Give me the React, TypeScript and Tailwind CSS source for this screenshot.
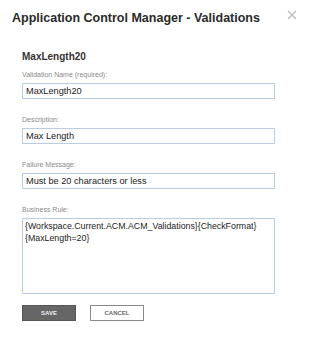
import React from 'react';

const Field: React.FC<{ label: string; value: string }> = ({ label, value }) => (
  <div className="mb-[17px]">
    <div className="text-[7px] leading-[8px] text-[#8a8a8a] mb-[4px]">{label}</div>
    <div className="h-[16px] w-[253px] border border-[#bccbe6] px-[3px] text-[9.2px] leading-[14px] text-[#222]">
      {value}
    </div>
  </div>
);

const App: React.FC = () => {
  return (
    <div className="w-[310px] h-[337px] bg-white font-['Liberation_Sans',Arial,sans-serif]">
      {/* Header */}
      <div className="flex items-start justify-between pl-[12px] pr-[13px] pt-[10px]">
        <h1 className="whitespace-nowrap text-[12.5px] leading-[16px] font-bold text-[#2a2a2a]">
          Application Control Manager - Validations
        </h1>
        <svg width="10" height="10" viewBox="0 0 10 10">
          <path d="M1 1L9 9M9 1L1 9" stroke="#bdbdbd" strokeWidth="1.4" />
        </svg>
      </div>

      <div className="pl-[22px] pt-[25px]">
        <h2 className="text-[10px] leading-[12px] font-bold text-[#333] mb-[8px]">MaxLength20</h2>

        <Field label="Validation Name (required):" value="MaxLength20" />
        <Field label="Description:" value="Max Length" />
        <Field label="Failure Message:" value="Must be 20 characters or less" />

        <div className="mb-[11px]">
          <div className="text-[7px] leading-[8px] text-[#8a8a8a] mb-[4px]">Business Rule:</div>
          <div className="h-[76px] w-[253px] border border-[#bccbe6] px-[2px] pt-[2px] text-[8.8px] leading-[11.5px] text-[#222]">
            {'{Workspace.Current.ACM.ACM_Validations}{CheckFormat}'}
            <br />
            {'{MaxLength=20}'}
          </div>
        </div>

        <div className="flex gap-[14px]">
          <button className="h-[16px] w-[54px] bg-[#666] border border-[#555] text-[#f0f0f0] text-[6px] font-bold leading-[14px]">
            SAVE
          </button>
          <button className="h-[16px] w-[54px] bg-white border border-[#8a8a8a] text-[#6a6a6a] text-[6px] font-bold leading-[14px]">
            CANCEL
          </button>
        </div>
      </div>
    </div>
  );
};

export default App;
